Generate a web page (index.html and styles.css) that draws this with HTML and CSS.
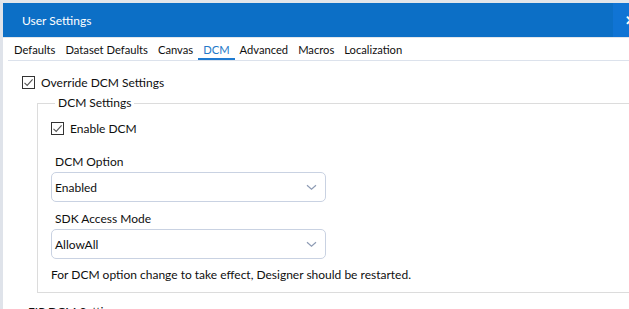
FILE: index.html
```html
<!DOCTYPE html>
<html lang="en">
<head>
  <meta charset="UTF-8">
  <title>User Settings</title>
  <link rel="stylesheet" href="styles.css">
</head>
<body>
  <div class="window">
    <div class="titlebar">
      <span class="title">User Settings</span>
      <span class="close">✕</span>
    </div>

    <div class="tabs">
      <span class="tab">Defaults</span>
      <span class="tab">Dataset Defaults</span>
      <span class="tab">Canvas</span>
      <span class="tab active">DCM</span>
      <span class="tab">Advanced</span>
      <span class="tab">Macros</span>
      <span class="tab">Localization</span>
    </div>

    <div class="content">
      <label class="check">
        <span class="box"><svg width="11" height="11" viewBox="0 0 11 11"><path d="M1.5 5.8 L4.2 8.4 L9.6 2.4" fill="none" stroke="#555" stroke-width="1.1"/></svg></span>
        Override DCM Settings
      </label>

      <fieldset class="group">
        <legend>DCM Settings</legend>

        <label class="check">
          <span class="box"><svg width="11" height="11" viewBox="0 0 11 11"><path d="M1.5 5.8 L4.2 8.4 L9.6 2.4" fill="none" stroke="#555" stroke-width="1.1"/></svg></span>
          Enable DCM
        </label>

        <div class="field-label first">DCM Option</div>
        <div class="combo">
          <span>Enabled</span>
          <svg width="11" height="7" viewBox="0 0 11 7"><path d="M1 1.2 L5.5 5.2 L10 1.2" fill="none" stroke="#8d9bb4" stroke-width="1.2"/></svg>
        </div>

        <div class="field-label">SDK Access Mode</div>
        <div class="combo">
          <span>AllowAll</span>
          <svg width="11" height="7" viewBox="0 0 11 7"><path d="M1 1.2 L5.5 5.2 L10 1.2" fill="none" stroke="#8d9bb4" stroke-width="1.2"/></svg>
        </div>

        <p class="note">For DCM option change to take effect, Designer should be restarted.</p>
      </fieldset>

      <div class="next-group">FIP DCM Settings</div>
    </div>
  </div>
</body>
</html>
```

FILE: styles.css
```css
html, body {
  margin: 0;
  padding: 0;
  background: #ffffff;
}

body {
  width: 629px;
  height: 309px;
  overflow: hidden;
  font-family: Lato, "Noto Sans", sans-serif;
  font-size: 12px;
  color: #0f0f0f;
}

.window {
  width: 660px;
  height: 320px;
  border-top: 3px solid #e4e6ea;
  border-left: 3px solid #dfe3ea;
  box-sizing: border-box;
  background: #ffffff;
}

/* title bar */
.titlebar {
  height: 34px;
  background-color: #0c6fc6;
  display: flex;
  align-items: center;
  border-bottom: 1px solid #e3e6eb;
}

.title {
  padding-left: 19px;
  color: #ffffff;
  font-size: 12px;
  flex: 1;
}

.close {
  width: 34px;
  height: 34px;
  margin-right: 13px;
  background-color: #1074d4;
  color: #ffffff;
  font-weight: bold;
  font-size: 13px;
  display: flex;
  align-items: center;
  justify-content: center;
}

/* tabs */
.tabs {
  margin-left: 5px;
  height: 22px;
  display: flex;
  align-items: flex-end;
  border-bottom: 1px solid #dce2ec;
  padding-left: 1px;
}

.tab {
  font-size: 11.2px;
  padding: 0 5px 1px 5px;
  border-bottom: 2px solid transparent;
  line-height: 14px;
}

.tab.active {
  color: #2378c8;
  border-bottom-color: #1f7bd1;
}

/* content */
.content {
  padding: 13px 0 0 19px;
}

.check {
  display: flex;
  align-items: center;
  gap: 6px;
  height: 16px;
}

.box {
  width: 11px;
  height: 11px;
  border: 1px solid #333333;
  display: flex;
  align-items: center;
  justify-content: center;
}

.group {
  margin: 5px 0 0 15px;
  padding: 0 0 9px 13px;
  border: 1px solid #dcdcdc;
  border-right: none;
  min-width: 0;
}

.group legend {
  margin-left: 4px;
  padding: 0 3px;
  line-height: 16px;
}

.group .check {
  margin-top: 9px;
}

.field-label {
  margin: 9px 0 2px 4px;
  line-height: 16px;
}

.field-label.first {
  margin-top: 18px;
}

.combo {
  width: 263px;
  height: 28px;
  border: 1px solid #c9d2e2;
  border-radius: 5px;
  display: flex;
  align-items: center;
  justify-content: space-between;
  padding: 0 8px 0 2px;
  box-sizing: content-box;
}

.combo span {
  padding-left: 1px;
}

.note {
  margin: 8px 0 0 0;
  line-height: 16px;
}

.next-group {
  margin: 11px 0 0 6px;
  line-height: 16px;
}
```
